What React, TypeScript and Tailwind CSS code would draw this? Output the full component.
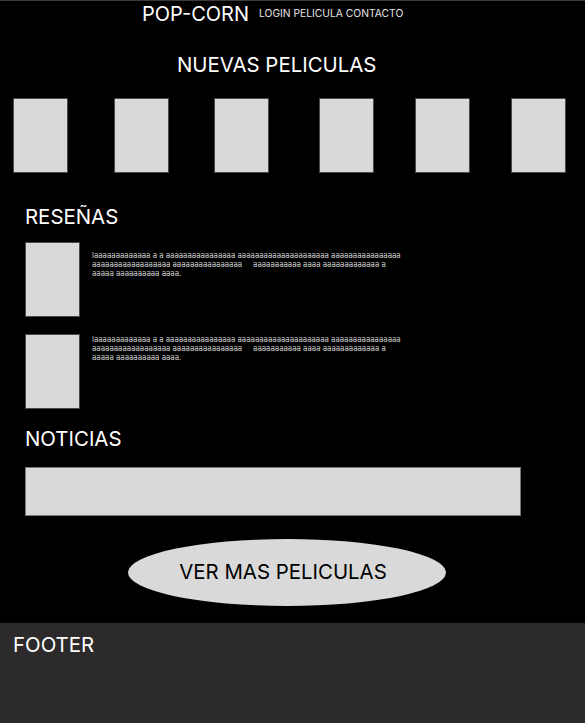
import React from "react";

const posterGaps = [
	"ml-[13px]",
	"ml-[46px]",
	"ml-[45px]",
	"ml-[50px]",
	"ml-[41px]",
	"ml-[41px]",
];

const reviewLines = [
	"laaaaaaaaaaaaa a a aaaaaaaaaaaaaaaa aaaaaaaaaaaaaaaaaaaaa aaaaaaaaaaaaaaaa",
	"aaaaaaaaaaaaaaaaaa aaaaaaaaaaaaaaaa     aaaaaaaaaaa aaaa aaaaaaaaaaaaa a",
	"aaaaa aaaaaaaaaa aaaa.",
];

const Review = ({ textOffset }: { textOffset: string }) => (
	<div className="flex">
		<div className="h-[75px] w-[55px] shrink-0 border border-[#4a4a4a] bg-[#d9d9d9]" />
		<p
			className={`ml-[12px] whitespace-pre text-[7.75px] leading-[9px] text-[#cfcfcf] ${textOffset}`}
		>
			{reviewLines.join("\n")}
		</p>
	</div>
);

export default function App() {
	return (
		<div className="flex h-[723px] w-[585px] flex-col bg-black font-['Inter',sans-serif] text-white">
			{/* Header */}
			<header className="flex items-center border-t border-[#3a3a3a] pl-[142px] pt-[1px]">
				<span className="text-[20px] leading-[24px]">POP-CORN</span>
				<nav className="ml-[10px] text-[10.3px] text-[#e5e5e5]">
					LOGIN PELICULA CONTACTO
				</nav>
			</header>

			<h1 className="mt-[27px] pl-[177px] text-[20.4px] leading-[24px]">
				NUEVAS PELICULAS
			</h1>

			{/* New movies */}
			<div className="mt-[21px] flex">
				{posterGaps.map((gap, i) => (
					<div
						key={i}
						className={`h-[75px] w-[55px] border border-[#4a4a4a] bg-[#d9d9d9] ${gap}`}
					/>
				))}
			</div>

			{/* Reviews */}
			<section className="px-[25px]">
				<h2 className="mt-[32px] text-[20.4px] leading-[24px]">RESEÑAS</h2>
				<div className="mt-[13px] flex flex-col gap-[17px]">
					<Review textOffset="mt-[9px]" />
					<Review textOffset="mt-[1px]" />
				</div>

				<h2 className="mt-[18px] text-[20.4px] leading-[24px]">NOTICIAS</h2>
				<div className="mt-[16px] h-[49px] w-[496px] border border-[#7a7a7a] bg-[#d9d9d9]" />
			</section>

			<div className="mt-[23px] flex pl-[128px]">
				<button className="flex h-[67px] w-[318px] items-center justify-center rounded-[50%] bg-[#d9d9d9] pr-[8px] text-[20.4px] text-black">
					VER MAS PELICULAS
				</button>
			</div>

			{/* Footer */}
			<footer className="mt-auto h-[100px] bg-[#2c2a2b] pl-[13px] pt-[10px]">
				<span className="text-[20.4px] leading-[24px]">FOOTER</span>
			</footer>
		</div>
	);
}
